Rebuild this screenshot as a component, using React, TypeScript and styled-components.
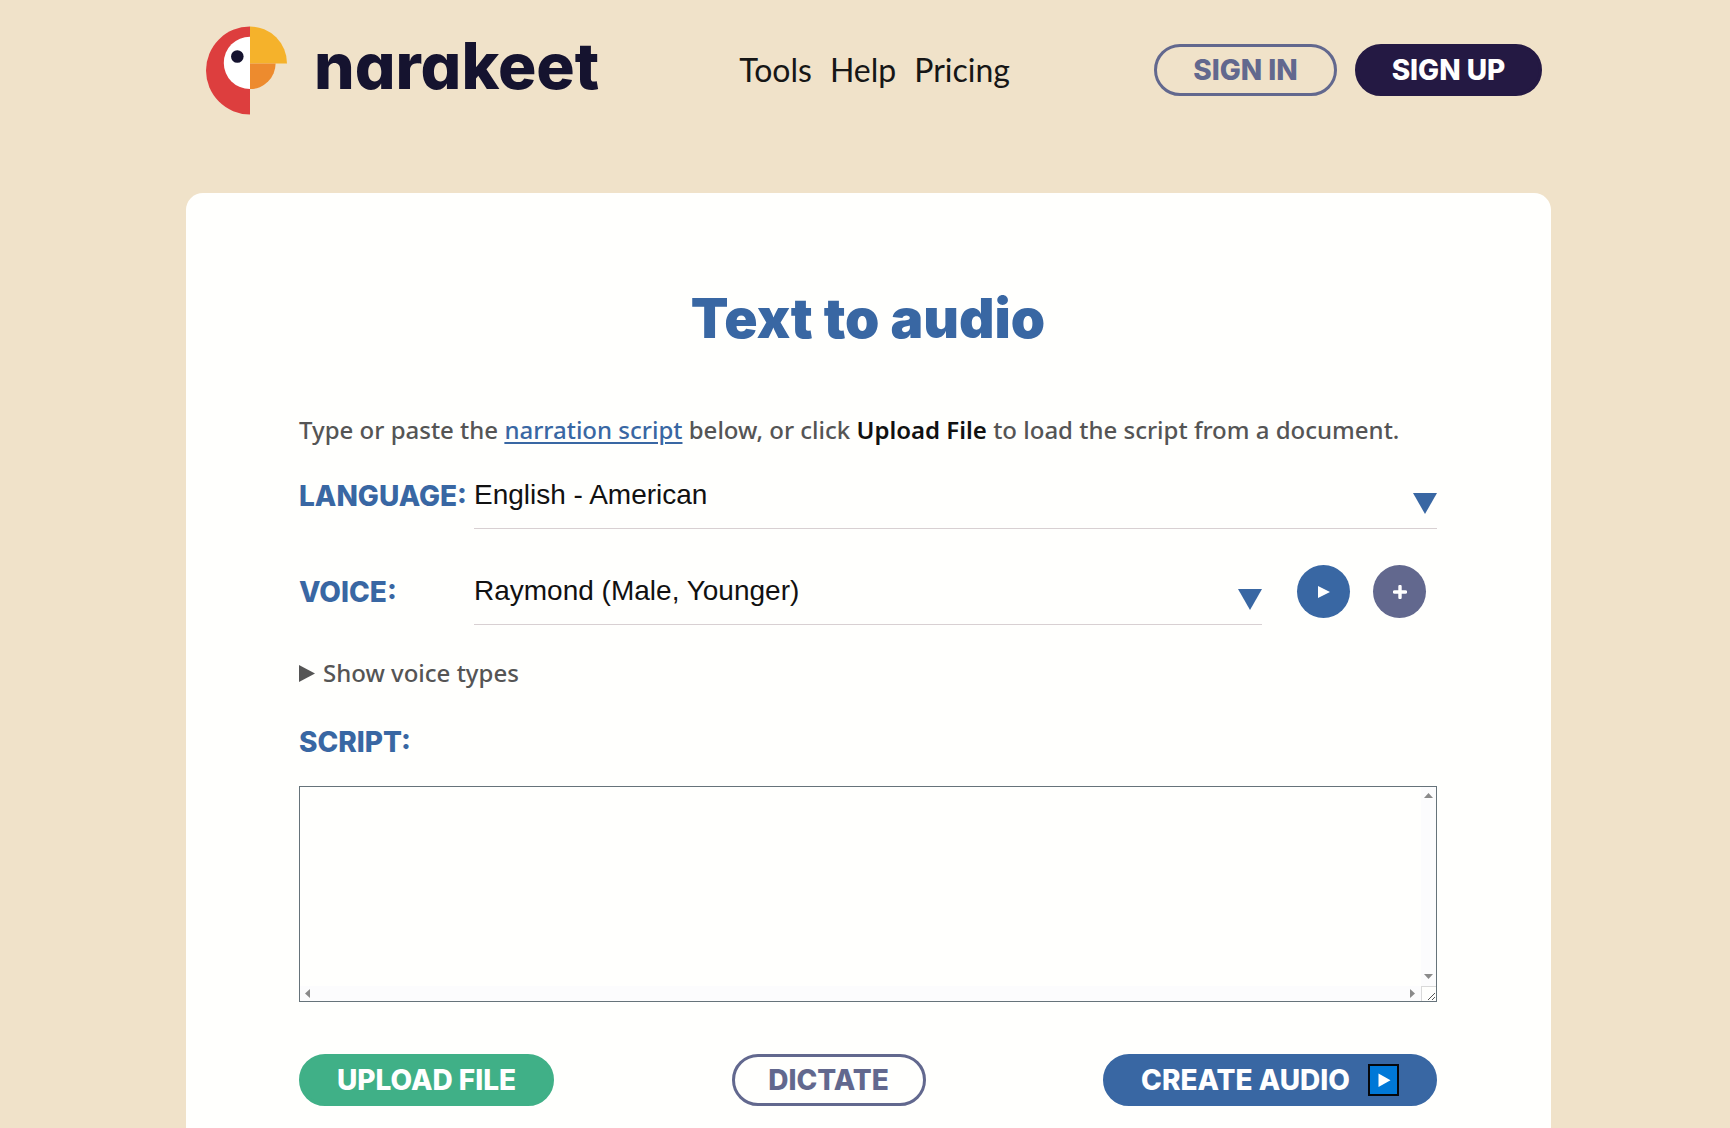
import React from "react";
import styled, { createGlobalStyle, css } from "styled-components";

const colors = {
  sand: "#f0e2c9",
  card: "#fffffd",
  blue: "#3967a3",
  slate: "#62688e",
  night: "#241943",
  green: "#40b087",
  ink: "#15132f",
  text: "#555555",
  rule: "#d8d0d2",
};

const light = `Lato, "Open Sans", sans-serif`;
const heavy = `Inter, "Open Sans", sans-serif`;
const copy = `"Noto Sans", "Open Sans", sans-serif`;

const GlobalStyle = createGlobalStyle`
  *, *::before, *::after { box-sizing: border-box; }
  body { margin: 0; background: ${colors.sand}; font-family: ${copy}; color: ${colors.text}; }
`;

const Page = styled.div`
  display: flex;
  flex-direction: column;
  min-height: 100vh;
  padding: 0 179px 0 186px;
`;

const Header = styled.header`
  display: flex;
  align-items: center;
  height: 140px;
  margin-bottom: 53px;
  padding: 0 9px 0 20px;
`;

const LogoLink = styled.a`
  display: flex;
  align-items: center;
  gap: 26px;
  color: ${colors.ink};
  text-decoration: none;
`;

const Wordmark = styled.span`
  padding-bottom: 8px;
  font: 800 64px/80px ${heavy};
  font-feature-settings: "cv11" 1;
`;

const Nav = styled.nav`
  display: flex;
  gap: 18px;
  margin-left: 140px;
`;

const NavLink = styled.a`
  font: 400 32px/40px ${light};
  color: #161616;
  text-decoration: none;
`;

const Actions = styled.div`
  display: flex;
  gap: 18px;
  margin-left: auto;
`;

const Pill = styled.button<{ $fill?: string; $min: number }>`
  display: flex;
  align-items: center;
  justify-content: center;
  gap: 18px;
  height: 52px;
  min-width: ${(p) => p.$min}px;
  padding: 0 24px;
  border: 3px solid ${(p) => p.$fill ?? colors.slate};
  border-radius: 26px;
  background: ${(p) => p.$fill ?? "transparent"};
  color: ${(p) => (p.$fill ? "#ffffff" : colors.slate)};
  font: 800 28px/40px ${heavy};
  text-transform: uppercase;
  white-space: nowrap;
  cursor: pointer;
`;

const Card = styled.main`
  flex: 1;
  padding: 93px 114px 21px 113px;
  border-radius: 17px 17px 0 0;
  background: ${colors.card};
`;

const Title = styled.h1`
  margin: 0 0 62px;
  font: 900 55px/64px ${heavy};
  color: ${colors.blue};
  text-align: center;
`;

const bodyText = css`
  font: 500 24px/36px ${copy};
`;

const Intro = styled.p`
  margin: 0 0 14px;
  ${bodyText}
  a { color: ${colors.blue}; text-decoration-thickness: 2px; text-underline-offset: 3px; }
  strong { color: #111111; font-weight: 600; }
`;

const FieldRow = styled.div`
  display: grid;
  grid-template-columns: 175px 1fr auto;
  align-items: center;
  margin-bottom: 29px;
`;

const Label = styled.label`
  font: 800 28px/40px ${heavy};
  color: ${colors.blue};
  text-transform: uppercase;
`;

const SelectBox = styled.div`
  position: relative;
  height: 67px;
  border-bottom: 1px solid ${colors.rule};
  svg { position: absolute; right: 0; bottom: 14px; pointer-events: none; }
`;

const Select = styled.select`
  appearance: none;
  width: 100%;
  height: 100%;
  padding: 0;
  border: 0;
  background: transparent;
  color: #111111;
  font: 400 28px/40px "Liberation Sans", Arial, sans-serif;
`;

const RoundButtons = styled.div`
  display: flex;
  gap: 23px;
  padding: 0 11px 0 35px;
`;

const Round = styled.button<{ $fill: string }>`
  display: grid;
  place-items: center;
  width: 53px;
  height: 53px;
  padding: 0;
  border: 0;
  border-radius: 50%;
  background: ${(p) => p.$fill};
  cursor: pointer;
`;

const VoiceTypes = styled.details`
  margin: 30px 0 31px;
`;

const Summary = styled.summary`
  display: flex;
  align-items: center;
  gap: 8px;
  list-style: none;
  cursor: pointer;
  ${bodyText}
`;

const ScriptLabel = styled(Label)`
  display: block;
  margin-bottom: 24px;
`;

const Editor = styled.div`
  display: grid;
  grid-template-columns: 1fr 15px;
  grid-template-rows: 199px 15px;
  margin-bottom: 52px;
  border: 1px solid #66737a;
`;

const Textarea = styled.textarea`
  display: block;
  width: 100%;
  height: 100%;
  padding: 2px;
  border: 0;
  outline: 0;
  resize: none;
  background: ${colors.card};
  font: 400 28px/40px "Liberation Mono", monospace;
`;

const Track = styled.div<{ $vertical?: boolean }>`
  display: flex;
  flex-direction: ${(p) => (p.$vertical ? "column" : "row")};
  align-items: center;
  justify-content: space-between;
  padding: ${(p) => (p.$vertical ? "6px 0 7px" : "0 6px 0 5px")};
  background: #fcfcfd;
`;

const Grip = styled.div`
  border: solid #d9d9d9;
  border-width: 1px 0 0 1px;
  svg { display: block; }
`;

const Buttons = styled.div`
  display: flex;
  justify-content: space-between;
`;

type TriangleProps = { width: number; height: number; points: string; color: string };

const Triangle = ({ width, height, points, color }: TriangleProps) => (
  <svg width={width} height={height} viewBox={`0 0 ${width} ${height}`} aria-hidden="true">
    <polygon points={points} fill={color} />
  </svg>
);

const SelectArrow = () => <Triangle width={24} height={21} points="0,0 24,0 12,21" color={colors.blue} />;

const Parrot = () => (
  <svg width="82" height="89" viewBox="0 0 82 89" aria-hidden="true">
    <path d="M44 .5A44 44 0 0 0 44 88.5Z" fill="#dd3e3e" />
    <path d="M44 10.7A26.2 26.2 0 0 0 44 63.1Z" fill="#ffffff" />
    <path d="M44 .5A37 37 0 0 1 81 37.5H44Z" fill="#f5b22b" />
    <path d="M44 37.5H69.6A25.6 25.6 0 0 1 44 63.1Z" fill="#ed8b2e" />
    <circle cx="31.3" cy="30.5" r="6.3" fill={colors.ink} />
  </svg>
);

const PlayBadge = () => (
  <svg width="31" height="32" viewBox="0 0 31 32" aria-hidden="true">
    <rect x="1" y="1" width="29" height="30" fill="#0078d7" stroke="#05070b" strokeWidth="2" />
    <polygon points="10.500,9.500 22.500,16.200 10.500,23" fill="#ffffff" />
  </svg>
);

export default function App() {
  return (
    <>
      <GlobalStyle />
      <Page>
        <Header>
          <LogoLink href="#">
            <Parrot />
            <Wordmark>narakeet</Wordmark>
          </LogoLink>
          <Nav>
            <NavLink href="#tools">Tools</NavLink>
            <NavLink href="#help">Help</NavLink>
            <NavLink href="#pricing">Pricing</NavLink>
          </Nav>
          <Actions>
            <Pill $min={183}>Sign in</Pill>
            <Pill $min={187} $fill={colors.night}>Sign up</Pill>
          </Actions>
        </Header>
        <Card>
          <Title>Text to audio</Title>
          <Intro>
            Type or paste the <a href="#script-format">narration script</a> below, or click{" "}
            <strong>Upload File</strong> to load the script from a document.
          </Intro>
          <FieldRow>
            <Label htmlFor="language">Language:</Label>
            <SelectBox>
              <Select id="language">
                <option>English - American</option>
              </Select>
              <SelectArrow />
            </SelectBox>
          </FieldRow>
          <FieldRow>
            <Label htmlFor="voice">Voice:</Label>
            <SelectBox>
              <Select id="voice">
                <option>Raymond (Male, Younger)</option>
              </Select>
              <SelectArrow />
            </SelectBox>
            <RoundButtons>
              <Round $fill={colors.blue} aria-label="Play voice sample">
                <Triangle width={12} height={12} points="0,0 12,6 0,12" color="#ffffff" />
              </Round>
              <Round $fill={colors.slate} aria-label="Add voice">
                <svg width="14" height="14" viewBox="0 0 14 14" aria-hidden="true">
                  <path d="M7 1.500V12.500M1.500 7H12.500" stroke="#ffffff" strokeWidth="3.400" strokeLinecap="round" />
                </svg>
              </Round>
            </RoundButtons>
          </FieldRow>
          <VoiceTypes>
            <Summary>
              <Triangle width={16} height={17} points="0,0 16,8.500 0,17" color={colors.text} />
              Show voice types
            </Summary>
          </VoiceTypes>
          <ScriptLabel htmlFor="script">Script:</ScriptLabel>
          <Editor>
            <Textarea id="script" />
            <Track $vertical>
              <Triangle width={9} height={5} points="0,5 4.500,0 9,5" color="#8a8a8a" />
              <Triangle width={9} height={5} points="0,0 9,0 4.500,5" color="#8a8a8a" />
            </Track>
            <Track>
              <Triangle width={5} height={9} points="5,0 0,4.500 5,9" color="#8a8a8a" />
              <Triangle width={5} height={9} points="0,0 5,4.500 0,9" color="#8a8a8a" />
            </Track>
            <Grip>
              <svg width="14" height="14" viewBox="0 0 14 14" aria-hidden="true">
                <path d="M6 13L13 6M10 13L13 10" stroke="#555555" strokeWidth="1" />
              </svg>
            </Grip>
          </Editor>
          <Buttons>
            <Pill $min={255} $fill={colors.green}>Upload file</Pill>
            <Pill $min={194}>Dictate</Pill>
            <Pill $min={334} $fill={colors.blue}>
              Create audio
              <PlayBadge />
            </Pill>
          </Buttons>
        </Card>
      </Page>
    </>
  );
}
